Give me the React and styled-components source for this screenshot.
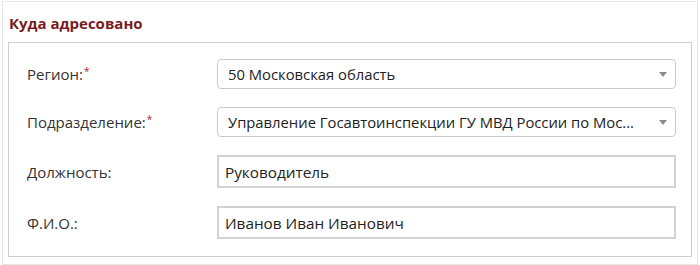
import { Fragment } from 'react';
import styled, { createGlobalStyle } from 'styled-components';

const GlobalStyle = createGlobalStyle`
  body {
    margin: 0;
    background: #fff;
    font-family: "Open Sans", "Noto Sans", sans-serif;
  }
`;

const Wrapper = styled.div`
  width: 694px;
  height: 262px;
  margin: 1px 0 0 2px;
  border: 1px solid #e6e6e6;
  display: flex;
  flex-direction: column;
`;

const Title = styled.h3`
  margin: 11px 0 9px 6px;
  font-size: 15px;
  line-height: 20px;
  font-weight: 700;
  color: #781c1c;
`;

const Panel = styled.div`
  margin: 0 5px;
  padding: 16px 15px 17px 18px;
  border: 1px solid #cfcfcf;
  display: grid;
  grid-template-columns: 190px minmax(0, 1fr);
  row-gap: 18px;
  align-items: center;
`;

const Label = styled.label`
  font-size: 15px;
  color: #333;
  white-space: nowrap;
`;

const Required = styled.sup`
  color: #b0262b;
  font-size: 10px;
  margin-left: 1px;
  vertical-align: 5px;
  line-height: 0;
`;

const Select = styled.div`
  position: relative;
  min-width: 0;
  height: 30px;
  box-sizing: border-box;
  border: 1px solid #c9c9c9;
  border-radius: 4px;
  padding: 0 20px 0 10px;
  display: flex;
  align-items: center;
  font-size: 14.8px;
  color: #222;
  background: #fff;

  span {
    overflow: hidden;
    white-space: nowrap;
    text-overflow: ellipsis;
  }

  &::after {
    content: '';
    position: absolute;
    right: 8px;
    top: 12px;
    border-left: 4px solid transparent;
    border-right: 4px solid transparent;
    border-top: 5px solid #8a8a8a;
  }
`;

const Input = styled.input`
  height: 33px;
  min-width: 0;
  box-sizing: border-box;
  border: 2px solid #d2d2d2;
  padding: 0 6px;
  font-family: inherit;
  font-size: 15.3px;
  color: #222;
  outline: none;
  width: 100%;
`;

const fields = [
  { id: 'region', label: 'Регион:', required: true, value: '50 Московская область', select: true },
  {
    id: 'unit',
    label: 'Подразделение:',
    required: true,
    value: 'Управление Госавтоинспекции ГУ МВД России по Мос...',
    select: true,
  },
  { id: 'position', label: 'Должность:', value: 'Руководитель' },
  { id: 'fio', label: 'Ф.И.О.:', value: 'Иванов Иван Иванович' },
];

export default function App() {
  return (
    <>
      <GlobalStyle />
      <Wrapper>
        <Title>Куда адресовано</Title>
        <Panel>
          {fields.map((f) => (
            <Fragment key={f.id}>
              <Label htmlFor={f.id}>
                {f.label}
                {f.required ? <Required>*</Required> : null}
              </Label>
              {f.select ? (
                <Select id={f.id}>
                  <span>{f.value}</span>
                </Select>
              ) : (
                <Input id={f.id} type="text" defaultValue={f.value} />
              )}
            </Fragment>
          ))}
        </Panel>
      </Wrapper>
    </>
  );
}
